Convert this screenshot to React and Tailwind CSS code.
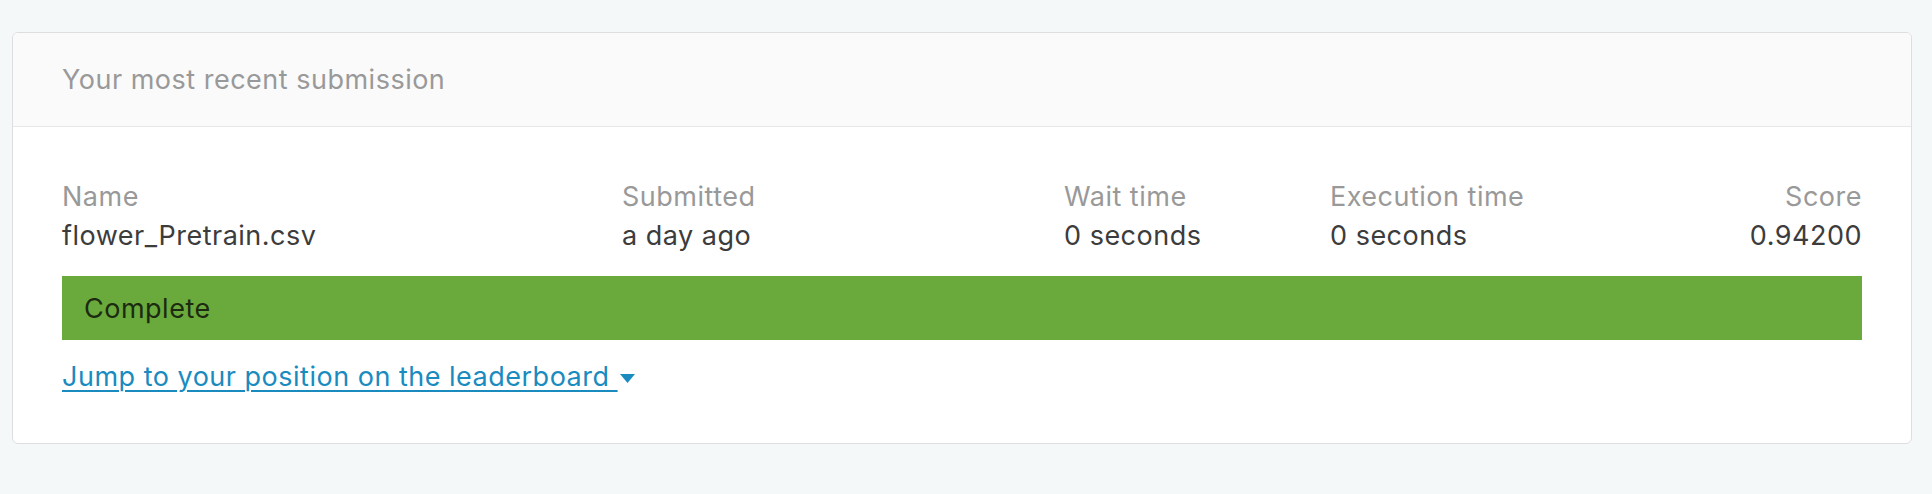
export default function App() {
  const columns = [
    { label: 'Name', value: 'flower_Pretrain.csv' },
    { label: 'Submitted', value: 'a day ago' },
    { label: 'Wait time', value: '0 seconds' },
    { label: 'Execution time', value: '0 seconds' },
  ]

  return (
    <div className="min-h-[494px] bg-[#f5f8f9] pl-[12px] pt-[32px] font-['Inter','Liberation_Sans',sans-serif] tracking-[0.5px]">
      <section className="w-[1900px] overflow-hidden rounded-[6px] border border-[#dcdee0] bg-white">
        <header className="flex h-[94px] items-center border-b border-[#e6e7e8] bg-[#fafafa] px-[49px] pt-[2px]">
          <h2 className="text-[27px] font-normal text-[#999999]">Your most recent submission</h2>
        </header>

        <div className="px-[49px] pb-[48px] pt-[52px]">
          <div className="grid grid-cols-[560px_442px_266px_1fr_auto] gap-y-[3px] text-[27px] leading-[36px]">
            {columns.map((col) => (
              <div key={col.label} className="text-[#999999]">
                {col.label}
              </div>
            ))}
            <div className="text-right text-[#999999]">Score</div>
            {columns.map((col) => (
              <div key={col.label + '-v'} className="text-[#3c3c3c]">
                {col.value}
              </div>
            ))}
            <div className="text-right text-[#3c3c3c]">0.94200</div>
          </div>

          <div className="mt-[22px] flex h-[64px] items-center bg-[#6aaa3c] px-[22px] pt-[2px] text-[27px] text-[#1b2a10]">
            Complete
          </div>

          <a
            href="#leaderboard"
            className="mt-[19px] inline-flex items-center text-[27px] leading-[36px] text-[#1a8bbf] underline underline-offset-[4px] decoration-[1.5px]"
          >
            Jump to your position on the leaderboard&nbsp;
            <svg width="15" height="9" viewBox="0 0 15 9" className="ml-[2px] mt-[2px]" aria-hidden="true">
              <path d="M0 0 L15 0 L7.5 9 Z" fill="#1a8bbf" />
            </svg>
          </a>
        </div>
      </section>
    </div>
  )
}
